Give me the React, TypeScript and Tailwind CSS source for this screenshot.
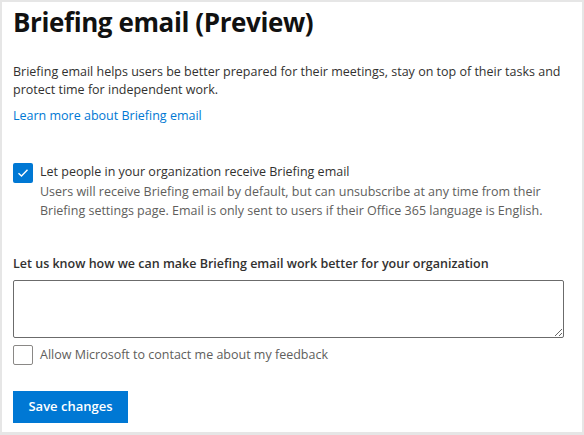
import { useState } from "react";

const Check = () => (
  <svg width="12" height="10" viewBox="0 0 12 10" fill="none">
    <path d="M1.5 5.2 4.5 8 10.5 1.8" stroke="white" strokeWidth="1.4" />
  </svg>
);

const App = () => {
  const [allowOrg, setAllowOrg] = useState(true);
  const [allowContact, setAllowContact] = useState(false);
  const [feedback, setFeedback] = useState("");

  return (
    <div className="h-[435px] w-[584px] bg-[#e6e6e6] pl-[2px] pt-[2px] font-['Open_Sans',sans-serif]">
      <div className="h-[430px] w-[580px] bg-white pl-[11px] pr-[12px]">
        <h1 className="pt-[2px] text-[26px] font-bold leading-[36px] tracking-[-0.4px] text-[#111]">
          Briefing email (Preview)
        </h1>

        <p className="mt-[23px] text-[12.5px] leading-[18px] text-[#323130]">
          Briefing email helps users be better prepared for their meetings, stay on top of their tasks and
          protect time for independent work.
        </p>
        <a href="#" className="mt-[8px] block text-[12.5px] leading-[18px] text-[#0078d4]">
          Learn more about Briefing email
        </a>

        <div className="mt-[37px] flex items-start gap-[7px]">
          <button
            onClick={() => setAllowOrg(!allowOrg)}
            className={`${
              allowOrg ? "bg-[#0078d4]" : "border border-[#323130] bg-white"
            } mt-[1px] flex h-[20px] w-[20px] shrink-0 items-center justify-center rounded-[2px]`}
          >
            {allowOrg && <Check />}
          </button>
          <div className="text-[12.5px] leading-[19.5px]">
            <div className="text-[#323130]">Let people in your organization receive Briefing email</div>
            <div className="text-[#605e5c]">
              Users will receive Briefing email by default, but can unsubscribe at any time from their
              Briefing settings page. Email is only sent to users if their Office 365 language is English.
            </div>
          </div>
        </div>

        <div className="mt-[33px] text-[12.5px] font-semibold leading-[19px] text-[#323130]">
          Let us know how we can make Briefing email work better for your organization
        </div>
        <textarea
          value={feedback}
          onChange={(e) => setFeedback(e.target.value)}
          className="mt-[7px] block h-[58px] w-[551px] rounded-[2px] border border-[#6b6b6b] bg-white px-2 py-1 text-[12.5px] outline-none"
        />

        <div className="mt-[7px] flex items-start gap-[7px]">
          <button
            onClick={() => setAllowContact(!allowContact)}
            className={`${
              allowContact ? "bg-[#0078d4]" : "border border-[#8a8886] bg-white"
            } flex h-[20px] w-[20px] shrink-0 items-center justify-center rounded-[2px]`}
          >
            {allowContact && <Check />}
          </button>
          <span className="text-[12.5px] leading-[19.5px] text-[#605e5c]">
            Allow Microsoft to contact me about my feedback
          </span>
        </div>

        <button className="mt-[26px] h-[32px] w-[115px] bg-[#0078d4] text-[13px] font-semibold text-white">
          Save changes
        </button>
      </div>
    </div>
  );
};

export default App;
